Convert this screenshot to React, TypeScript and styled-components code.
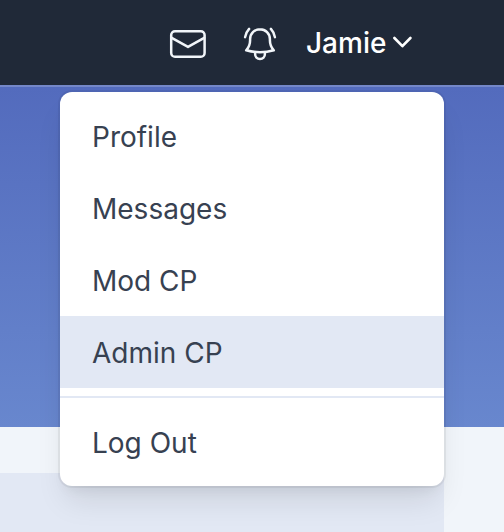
import React from "react";
import styled, { createGlobalStyle } from "styled-components";

const GlobalStyle = createGlobalStyle`
  * { box-sizing: border-box; }
  body {
    margin: 0;
    overflow: hidden;
    background: #f1f5fa;
    font-family: Inter, sans-serif;
  }
`;

const Page = styled.div`
  position: relative;
  display: flex;
  flex-direction: column;
  width: 504px;
  height: 532px;
  overflow: hidden;
`;

const Header = styled.header`
  display: flex;
  align-items: center;
  flex: 0 0 85px;
  padding: 3px 92px 0 168px;
  background: #202938;
`;

const IconButton = styled.button`
  display: flex;
  width: 40px;
  height: 40px;
  margin-right: 32px;
  padding: 0;
  border: 0;
  background: none;
  color: #f1f5f9;
`;

const UserButton = styled.button`
  display: flex;
  align-items: center;
  gap: 6px;
  margin: -2px 0 0 -6px;
  padding: 0;
  border: 0;
  background: none;
  color: #fff;
  font: 500 28px/40px Inter, sans-serif;
`;

const Banner = styled.div`
  flex: 0 0 342px;
  border-top: 2px solid #7487c8;
  background: linear-gradient(#536bbd, #6887ce);
`;

const Content = styled.main`
  flex: 1;
  padding-top: 46px;
`;

const Panel = styled.section`
  width: 444px;
  height: 100%;
  background: #e2e8f4;
`;

const Menu = styled.nav`
  position: absolute;
  top: 92px;
  left: 60px;
  width: 384px;
  padding: 8px 0;
  border-radius: 12px;
  background: #fff;
  box-shadow: 0 0 0 2px rgba(0, 0, 0, 0.05), 0 20px 30px -6px rgba(0, 0, 0, 0.1),
    0 8px 12px -4px rgba(0, 0, 0, 0.05);
`;

const MenuItem = styled.a<{ $active?: boolean }>`
  display: block;
  height: 72px;
  padding: 17px 32px 15px;
  background: ${({ $active }) => ($active ? "#e2e8f4" : "transparent")};
  color: #374151;
  font-size: 28px;
  line-height: 40px;
`;

const Divider = styled.div`
  height: 2px;
  margin: 8px 0;
  background: #e2e8f4;
`;

const MailIcon = () => (
  <svg width="40" height="40" viewBox="0 0 40 40" fill="none" stroke="currentColor" strokeWidth="2.5" strokeLinecap="round" strokeLinejoin="round">
    <rect x="3.2" y="7.2" width="33.4" height="25.5" rx="3.8" />
    <path d="M3.7 13.8 20 22.9l16.2-9.1" />
  </svg>
);

const BellIcon = () => (
  <svg width="40" height="40" viewBox="0 0 40 40" fill="none" stroke="currentColor" strokeWidth="2.5" strokeLinejoin="round" strokeLinecap="round">
    <path d="M20 5.2c-5.6 0-9.9 4.4-9.9 9.9v1.2c0 3.8-1.4 7.4-3.9 10 4.2 1.2 8.9 1.9 13.8 1.9s9.6-.7 13.8-1.9c-2.5-2.6-3.9-6.2-3.9-10v-1.2c0-5.5-4.3-9.9-9.9-9.9Z" />
    <path d="M15.1 28.5v1.5c0 3 2.1 5 4.9 5s4.9-2 4.9-5v-1.5" />
    <path d="M9.1 4.9C7 7.2 5.5 10 5.1 13.2M30.9 4.9c2.1 2.3 3.6 5.1 4 8.3" />
  </svg>
);

const ChevronIcon = () => (
  <svg width="20" height="20" viewBox="0 0 20 20" fill="none" stroke="currentColor" strokeWidth="2.6" strokeLinecap="round" strokeLinejoin="round">
    <path d="m2.4 5 8 8.2 8-8.2" />
  </svg>
);

export default function App() {
  return (
    <Page>
      <GlobalStyle />
      <Header>
        <IconButton aria-label="Messages"><MailIcon /></IconButton>
        <IconButton aria-label="Notifications"><BellIcon /></IconButton>
        <UserButton>Jamie<ChevronIcon /></UserButton>
      </Header>
      <Banner />
      <Content><Panel /></Content>
      <Menu>
        <MenuItem>Profile</MenuItem>
        <MenuItem>Messages</MenuItem>
        <MenuItem>Mod CP</MenuItem>
        <MenuItem $active>Admin CP</MenuItem>
        <Divider />
        <MenuItem>Log Out</MenuItem>
      </Menu>
    </Page>
  );
}
